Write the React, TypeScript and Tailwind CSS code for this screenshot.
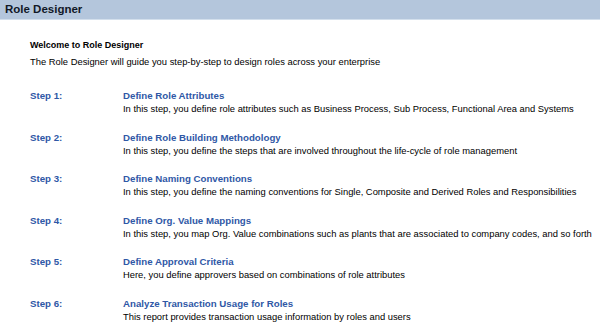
const steps = [
  {
    label: 'Step 1:',
    title: 'Define Role Attributes',
    text: 'In this step, you define role attributes such as Business Process, Sub Process, Functional Area and Systems',
  },
  {
    label: 'Step 2:',
    title: 'Define Role Building Methodology',
    text: 'In this step, you define the steps that are involved throughout the life-cycle of role management',
  },
  {
    label: 'Step 3:',
    title: 'Define Naming Conventions',
    text: 'In this step, you define the naming conventions for Single, Composite and Derived Roles and Responsibilities',
  },
  {
    label: 'Step 4:',
    title: 'Define Org. Value Mappings',
    text: 'In this step, you map Org. Value combinations such as plants that are associated to company codes, and so forth',
  },
  {
    label: 'Step 5:',
    title: 'Define Approval Criteria',
    text: 'Here, you define approvers based on combinations of role attributes',
  },
  {
    label: 'Step 6:',
    title: 'Analyze Transaction Usage for Roles',
    text: 'This report provides transaction usage information by roles and users',
  },
];

export default function App() {
  return (
    <div className="w-[600px] h-[336px] overflow-hidden bg-white font-['Liberation_Sans',Arial,sans-serif] text-black">
      {/* Header */}
      <div className="h-[20px] bg-[#b4c6dc] border-b border-[#d3dfec] flex items-center px-[5px]">
        <h1 className="text-[11.5px] font-bold text-[#111827] leading-none">Role Designer</h1>
      </div>

      <div className="pl-[30px] pt-[19px]">
        <h2 className="text-[9px] font-bold leading-[13px] whitespace-nowrap">Welcome to Role Designer</h2>
        <p className="mt-[3px] text-[9.4px] leading-[13px] whitespace-nowrap">
          The Role Designer will guide you step-by-step to design roles across your enterprise
        </p>

        <div className="mt-[21px] flex flex-col gap-[15.6px]">
          {steps.map((s) => (
            <div key={s.label} className="flex">
              <div className="w-[93px] shrink-0 text-[9.7px] font-bold text-[#2f58a6] leading-[13px] whitespace-nowrap">
                {s.label}
              </div>
              <div className="whitespace-nowrap">
                <div className="text-[9.7px] font-bold text-[#2f58a6] leading-[13px]">{s.title}</div>
                <div className="text-[9.4px] leading-[13px]">{s.text}</div>
              </div>
            </div>
          ))}
        </div>
      </div>
    </div>
  );
}
